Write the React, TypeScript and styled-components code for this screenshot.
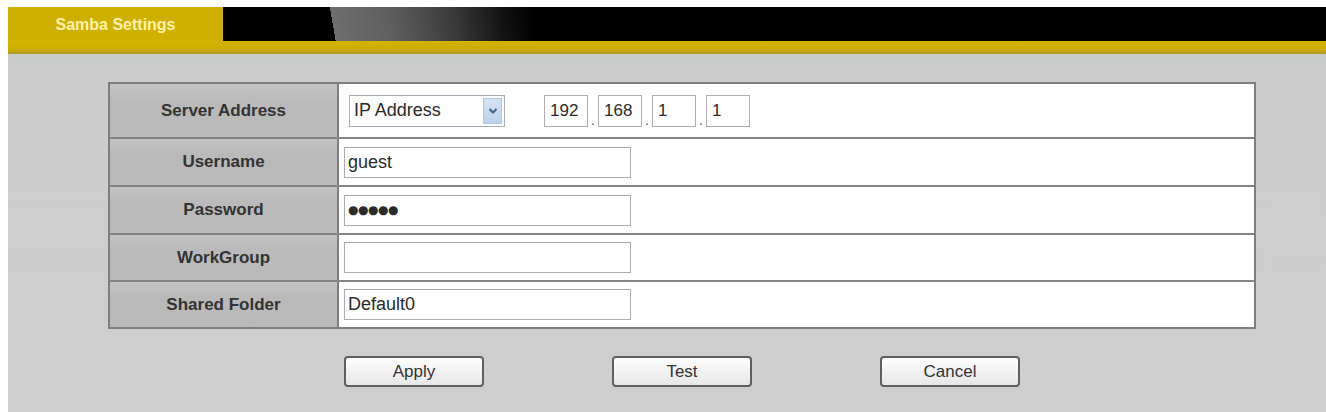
import React, { FC } from "react";
import styled, { createGlobalStyle } from "styled-components";

const GlobalStyle = createGlobalStyle`
  html, body {
    margin: 0;
    background: #ffffff;
  }
  body {
    padding: 7px 0 0 8px;
    font-family: "Liberation Sans", Arial, sans-serif;
  }
`;

type Field = {
  label: string;
  h: number;
};

const fields: Field[] = [
  { label: "Server Address", h: 53 },
  { label: "Username", h: 46 },
  { label: "Password", h: 46 },
  { label: "WorkGroup", h: 45 },
  { label: "Shared Folder", h: 45 },
];

const ip = ["192", "168", "1", "1"];

const Chevron: FC = () => (
  <svg width="10" height="8" viewBox="0 0 10 8">
    <path d="M1.5 2 L5 5.5 L8.5 2" fill="none" stroke="#3f5c8c" strokeWidth="2" />
  </svg>
);

const renderValue = (label: string) => {
  switch (label) {
    case "Server Address":
      return (
        <>
          <SelectBox>
            <SelectText>IP Address</SelectText>
            <SelectArrow>
              <Chevron />
            </SelectArrow>
          </SelectBox>
          <IpGroup>
            {ip.map((part, i) => (
              <React.Fragment key={i}>
                {i > 0 && <IpDot>.</IpDot>}
                <IpBox readOnly defaultValue={part} />
              </React.Fragment>
            ))}
          </IpGroup>
        </>
      );
    case "Username":
      return <TextBox readOnly defaultValue="guest" />;
    case "Password":
      return <TextBox readOnly defaultValue="●●●●●" $secret />;
    case "WorkGroup":
      return <TextBox readOnly defaultValue="" />;
    default:
      return <TextBox readOnly defaultValue="Default0" />;
  }
};

const App: FC = () => {
  return (
    <>
      <GlobalStyle />
      <Page>
        <Header>
          <TopBar>
            <Tab>Samba Settings</Tab>
            <Band />
          </TopBar>
          <Strip />
        </Header>
        <Content>
          <SettingsTable>
            {fields.map((f, i) => (
              <Row key={f.label} $h={f.h} $first={i === 0}>
                <Label>{f.label}</Label>
                <Value>{renderValue(f.label)}</Value>
              </Row>
            ))}
          </SettingsTable>
          <ButtonRow>
            <Button>Apply</Button>
            <Button>Test</Button>
            <Button>Cancel</Button>
          </ButtonRow>
        </Content>
      </Page>
    </>
  );
};

export default App;

const Page = styled.div`
  display: flex;
  flex-direction: column;
  width: 1318px;
`;

const Header = styled.div`
  display: flex;
  flex-direction: column;
`;

const TopBar = styled.div`
  display: flex;
  height: 34px;
`;

const Tab = styled.div`
  width: 215px;
  display: flex;
  align-items: center;
  justify-content: center;
  background: #cfb000;
  color: #fff2ae;
  font-size: 16px;
  font-weight: bold;
  padding-top: 1px;
  box-sizing: border-box;
`;

const Band = styled.div`
  flex: 1;
  background: linear-gradient(
    80deg,
    #000 0 111px,
    #6e6e6e 111px,
    #5e5e5e 170px,
    #3a3a3a 230px,
    #121212 280px,
    #000 310px
  );
`;

const Strip = styled.div`
  height: 13px;
  background: linear-gradient(#d3b400, #c9ac00 70%, #a99a2a);
`;

const Content = styled.div`
  background: linear-gradient(#c6cbcb, #cdcdcd 14px, #cecece);
  min-height: 358px;
  padding: 28px 0 0 100px;
  box-sizing: border-box;
`;

const SettingsTable = styled.div`
  width: 1148px;
  border: 2px solid #7e7e7e;
  box-sizing: border-box;
  background: #ffffff;
`;

const Row = styled.div<{ $h: number; $first: boolean }>`
  display: grid;
  grid-template-columns: 229px 1fr;
  height: ${(p) => p.$h}px;
  border-top: ${(p) => (p.$first ? "none" : "2px solid #858585")};
`;

const Label = styled.div`
  display: flex;
  align-items: center;
  justify-content: center;
  background: linear-gradient(#c4c4c4, #bababa 30%, #b9b9b9);
  border-right: 2px solid #7e7e7e;
  color: #333333;
  font-size: 17px;
  font-weight: bold;
`;

const Value = styled.div`
  display: flex;
  align-items: center;
  padding-left: 5px;
  background: #ffffff;
`;

const TextBox = styled.input<{ $secret?: boolean }>`
  width: 287px;
  height: 31px;
  box-sizing: border-box;
  border: 1px solid #abadb3;
  border-top-color: #a4a6ac;
  padding: 0 3px;
  margin: 0;
  outline: none;
  background: #fff;
  color: #2a2a2a;
  font-family: ${(p) =>
    p.$secret ? '"DejaVu Sans", sans-serif' : '"Liberation Sans", Arial, sans-serif'};
  font-size: ${(p) => (p.$secret ? "12px" : "18px")};
  letter-spacing: ${(p) => (p.$secret ? "-0.5px" : "0")};
`;

const SelectBox = styled.div`
  width: 156px;
  height: 32px;
  box-sizing: border-box;
  margin-left: 5px;
  border: 1px solid #a5acb5;
  display: flex;
  align-items: center;
  justify-content: space-between;
  padding: 1px 2px 1px 4px;
  background: #fff;
`;

const SelectText = styled.span`
  font-size: 18px;
  color: #2a2a2a;
`;

const SelectArrow = styled.span`
  width: 19px;
  height: 26px;
  display: flex;
  align-items: center;
  justify-content: center;
  background: linear-gradient(#d4e3f5, #bcd2ee);
  border: 1px solid #b0c6e4;
  box-sizing: border-box;
`;

const IpGroup = styled.div`
  display: flex;
  align-items: flex-end;
  margin-left: 39px;
`;

const IpBox = styled.input`
  width: 44px;
  height: 32px;
  box-sizing: border-box;
  border: 1px solid #abadb3;
  padding: 0 5px;
  margin: 0;
  outline: none;
  background: #fff;
  color: #2a2a2a;
  font-family: "Liberation Sans", Arial, sans-serif;
  font-size: 17px;
`;

const IpDot = styled.span`
  width: 10px;
  text-align: center;
  font-size: 14px;
  line-height: 14px;
  color: #555;
`;

const ButtonRow = styled.div`
  width: 1148px;
  display: flex;
  justify-content: center;
  gap: 128px;
  margin-top: 27px;
`;

const Button = styled.button`
  width: 140px;
  height: 31px;
  border: 2px solid #5c6064;
  border-radius: 4px;
  background: linear-gradient(#fefefe, #f2f2f2 50%, #e6e6e6);
  color: #333333;
  font-family: "Liberation Sans", Arial, sans-serif;
  font-size: 17px;
  padding: 0;
`;
